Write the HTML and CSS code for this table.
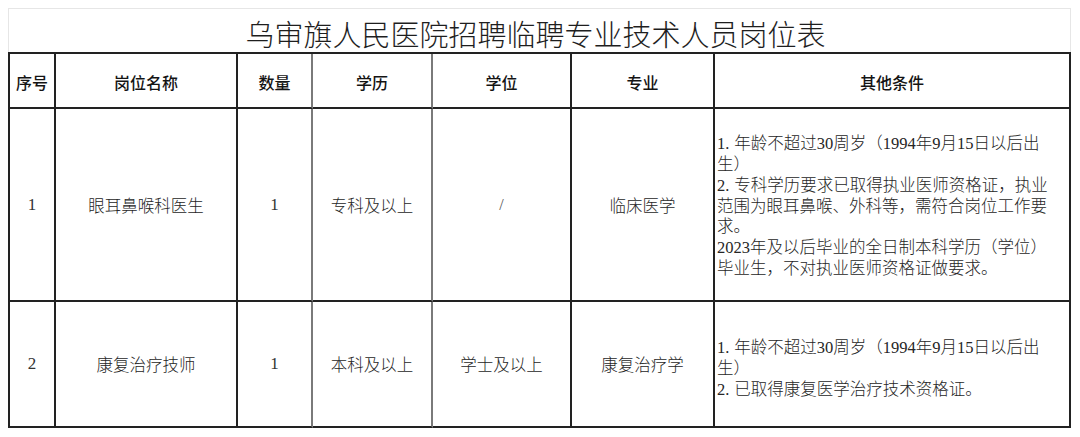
FILE: index.html
```html
<!DOCTYPE html>
<html lang="zh-CN">
<head>
<meta charset="utf-8">
<title>乌审旗人民医院招聘临聘专业技术人员岗位表</title>
<link rel="stylesheet" href="styles.css">
</head>
<body>
<div class="sheet">
  <div class="title">乌审旗人民医院招聘临聘专业技术人员岗位表</div>
  <div class="grid">
    <div class="cell head">序号</div>
    <div class="cell head">岗位名称</div>
    <div class="cell head gray-r">数量</div>
    <div class="cell head gray-r">学历</div>
    <div class="cell head">学位</div>
    <div class="cell head">专业</div>
    <div class="cell head">其他条件</div>

    <div class="cell num">1</div>
    <div class="cell">眼耳鼻喉科医生</div>
    <div class="cell num gray-r">1</div>
    <div class="cell gray-r">专科及以上</div>
    <div class="cell num slash">/</div>
    <div class="cell">临床医学</div>
    <div class="cell cond cond-1">
      <p>1<span class="dot">.</span>年龄不超过30周岁（1994年9月15日以后出</p>
      <p>生）</p>
      <p>2<span class="dot">.</span>专科学历要求已取得执业医师资格证，执业</p>
      <p>范围为眼耳鼻喉、外科等，需符合岗位工作要</p>
      <p>求。</p>
      <p>2023年及以后毕业的全日制本科学历（学位）</p>
      <p>毕业生，不对执业医师资格证做要求。</p>
    </div>

    <div class="cell num">2</div>
    <div class="cell">康复治疗技师</div>
    <div class="cell num gray-r">1</div>
    <div class="cell gray-r">本科及以上</div>
    <div class="cell">学士及以上</div>
    <div class="cell">康复治疗学</div>
    <div class="cell cond cond-2">
      <p>1<span class="dot">.</span>年龄不超过30周岁（1994年9月15日以后出</p>
      <p>生）</p>
      <p>2<span class="dot">.</span>已取得康复医学治疗技术资格证。</p>
    </div>
  </div>
</div>
</body>
</html>
```

FILE: styles.css
```css
* {
  box-sizing: border-box;
}

html, body {
  margin: 0;
  padding: 0;
  background: #ffffff;
}

body {
  padding: 8px;
  font-family: "Liberation Serif", "Noto Sans CJK SC", serif;
  color: #222222;
}

.sheet {
  width: 1063px;
}

.title {
  height: 44px;
  border: 1px solid #e6e6e6;
  border-bottom: none;
  display: flex;
  align-items: center;
  justify-content: center;
  padding: 4px 8px 0 0;
  font-family: "Noto Sans CJK SC", sans-serif;
  font-weight: 300;
  font-size: 29px;
  color: #1e1e1e;
  letter-spacing: 0;
}

.grid {
  display: grid;
  grid-template-columns: 46px 182px 75px 120px 139px 143px 356px;
  grid-template-rows: 55px 193px 126px;
  border-top: 2px solid #222222;
  border-left: 2px solid #222222;
}

.cell {
  border-right: 2px solid #222222;
  border-bottom: 2px solid #222222;
  display: flex;
  align-items: center;
  justify-content: center;
  font-family: "Liberation Serif", "Noto Sans CJK SC", serif;
  font-weight: 300;
  font-size: 16.5px;
  color: #262626;
}

.cell.gray-r {
  border-right-color: #7a7a7a;
}

.head {
  font-family: "Noto Sans CJK SC", sans-serif;
  font-weight: 500;
  font-size: 16px;
  color: #141414;
  padding-top: 2px;
}

.num {
  font-size: 17px;
  color: #333333;
}

.slash {
  color: #555555;
  font-size: 16px;
}

.cond {
  flex-direction: column;
  align-items: flex-start;
  justify-content: center;
  padding-left: 2px;
  line-height: 20.8px;
}

.cond p {
  margin: 0;
  white-space: nowrap;
}

.cond-1 {
  padding-top: 5px;
}

.cond-2 {
  padding-top: 11px;
}

.dot {
  display: inline-block;
  width: 9px;
}
```
